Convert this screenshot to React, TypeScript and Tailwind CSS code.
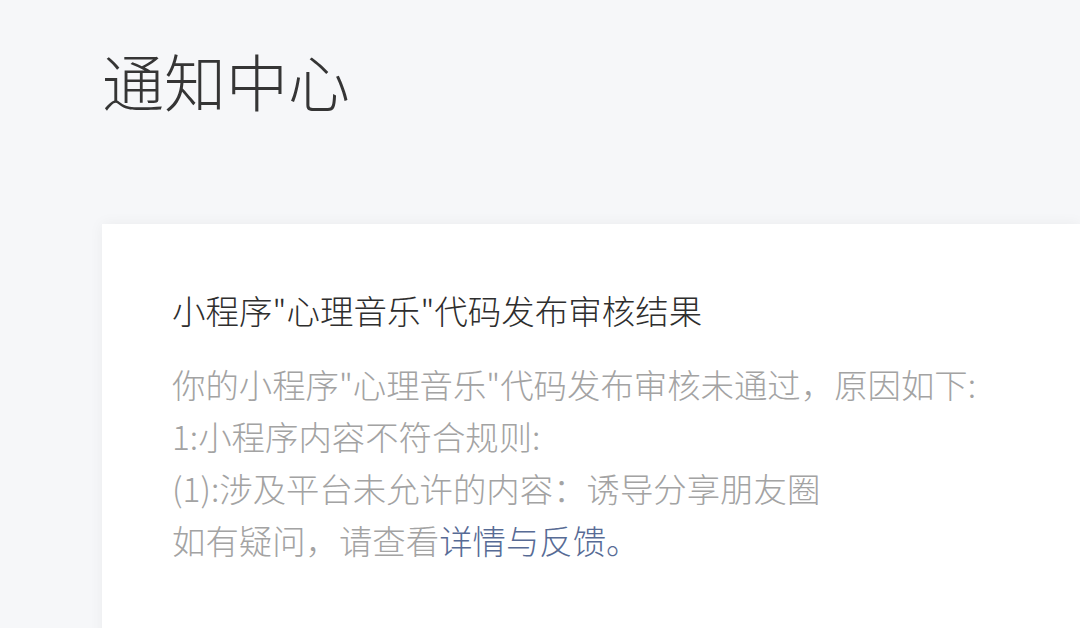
export default function App() {
  return (
    <div
      className="h-[628px] w-[1080px] overflow-hidden bg-[#f6f7f9] pl-[102px]"
      style={{ fontFamily: '"Noto Sans CJK SC", "Noto Sans", sans-serif' }}
    >
      <h1 className="pt-[38px] text-[62px] leading-[84px] font-light text-[#353535]">通知中心</h1>
      <div className="mt-[102px] h-[420px] bg-white pt-[62px] pl-[70px] shadow-[0_0_14px_rgba(0,0,0,0.05)]">
        <h2 className="text-[33.5px] leading-[48px] font-light text-[#2e2e2e]">小程序"心理音乐"代码发布审核结果</h2>
        <div className="mt-[24px] text-[33.4px] leading-[52px] font-light text-[#a3a3a3]">
          <p>你的小程序"心理音乐"代码发布审核未通过，原因如下:</p>
          <p>1:小程序内容不符合规则:</p>
          <p>(1):涉及平台未允许的内容：诱导分享朋友圈</p>
          <p>
            如有疑问，请查看<a className="text-[#576b95]">详情与反馈。</a>
          </p>
        </div>
      </div>
    </div>
  );
}
